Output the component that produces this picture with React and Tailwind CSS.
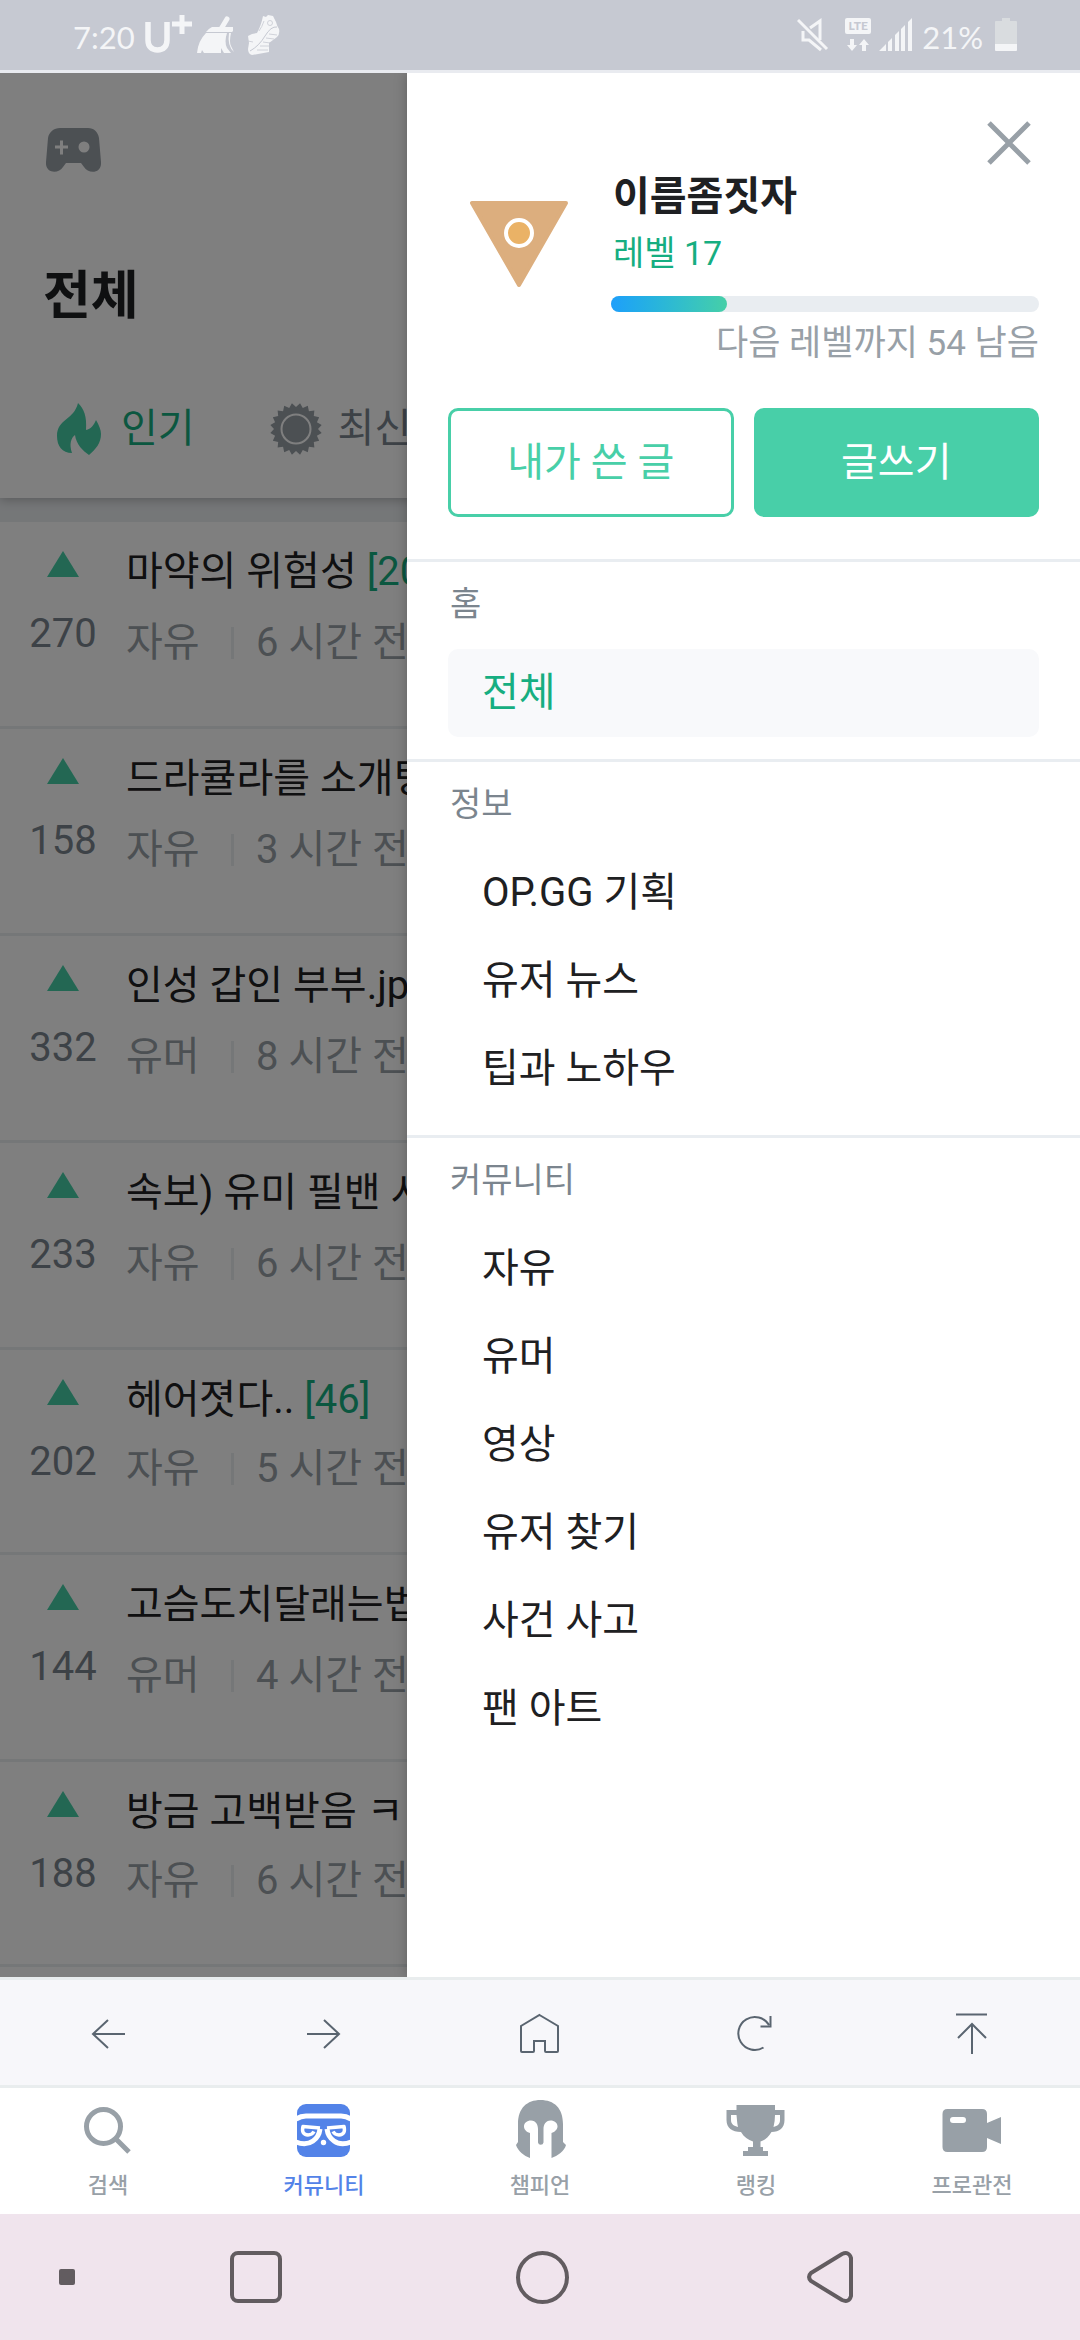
import React from 'react';

const posts = [
  { votes: 270, title: '마약의 위험성', comments: 20, board: '자유', time: '6 시간 전', hasImage: true },
  { votes: 158, title: '드라큘라를 소개팅', board: '자유', time: '3 시간 전', hasImage: true },
  { votes: 332, title: '인성 갑인 부부.jp', board: '유머', time: '8 시간 전', hasImage: true },
  { votes: 233, title: '속보) 유미 필밴 시', board: '자유', time: '6 시간 전', hasImage: true },
  { votes: 202, title: '헤어졋다..', comments: 46, board: '자유', time: '5 시간 전', hasImage: false },
  { votes: 144, title: '고슴도치달래는법', board: '유머', time: '4 시간 전', hasImage: true },
  { votes: 188, title: '방금 고백받음 ㅋ', board: '자유', time: '6 시간 전', hasImage: false },
];

const menu = [
  { name: '홈', items: ['전체'] },
  { name: '정보', items: ['OP.GG 기획', '유저 뉴스', '팁과 노하우'] },
  { name: '커뮤니티', items: ['자유', '유머', '영상', '유저 찾기', '사건 사고', '팬 아트'] },
];

function StatusBar() {
  return (
    <header className="flex h-[73px] items-center justify-between border-b-[3px] border-[#e9ebf0] bg-[#c6c9d2] pl-[73px] pr-[63px] font-['Lato',sans-serif] text-[31px] leading-10 text-[#f4f5f7]">
      <div className="flex items-center">
        <span className="pt-1">7:20</span>
        <svg viewBox="0 0 50 40" className="ml-2 h-10 w-[50px]" fill="none" stroke="currentColor" aria-label="U+">
          <path d="M5 7v18c0 7 4 10 9.500 10s9.500-3 9.500-10V7" strokeWidth="5.500" />
          <path d="M29 9h20M39 -1v20" strokeWidth="5" />
        </svg>
        <svg viewBox="0 0 38 40" className="ml-1 h-10 w-[38px]" fill="currentColor">
          <path d="M30 4l-6 10" stroke="currentColor" strokeWidth="5" strokeLinecap="round" />
          <path d="M15 12h21v4l-1 1H9q2-3 6-5z" />
          <path d="M9 18h21q-3 9 0 15l4 5h-7l-3-5v5H7l-2-3-1 3H0q1-12 9-20z" />
          <path d="M32 18h2q-2 9 0 13l3 6q-7-6-5-19z" />
        </svg>
        <svg viewBox="0 0 34 40" className="ml-3 h-10 w-[34px]" fill="currentColor">
          <path d="M16 1l3 1 2-2 5 1 3 6q1 4 3 7 1 5-2 8l-8 6 0 9-17 3q-4-1-4-6l1-6-1-7 4-2 5-1q4-7 6-17z" />
          <g stroke="#c6c9d2" fill="none">
            <path d="M3 36Q12 31 18 21t12-9" />
            <path d="M19 23l8 1M16 27l7 1M13 31l9 0M10 35l11 0M22 19l8 1M1 26l5 1M17 6q-2 6-5 10" strokeWidth="0.800" />
            <circle cx="23" cy="8" r="2.500" strokeWidth="0.800" />
          </g>
        </svg>
      </div>
      <div className="flex items-center">
        <svg viewBox="0 0 32 34" className="h-[34px] w-8" fill="none" stroke="currentColor" strokeWidth="3">
          <path d="M1 2l29 29" />
          <path d="M13 10l10-7v19M6 13v9h6l12 10" />
        </svg>
        <div className="ml-4 flex w-[26px] flex-col items-center">
          <span className="flex h-4 w-full items-center justify-center rounded-xs bg-[#f4f5f7] text-[12px] font-black leading-4 text-[#c6c9d2]">LTE</span>
          <svg viewBox="0 0 22 14" className="mt-1 h-3.5 w-[22px]" fill="currentColor">
            <path d="M3 1h4v6h3l-5 6-5-6h3zM15 13h4V7h3l-5-6-5 6h3z" />
          </svg>
        </div>
        <svg viewBox="0 0 33 34" className="ml-2 h-[34px] w-[33px]" fill="currentColor">
          <path d="M0 33l7-7v7zM9 24l4-4v13H9zM16 17l4-4v20h-4zM22 11l4-4v26h-4zM29 4l4-4v33h-4z" />
        </svg>
        <span className="ml-2.5 pt-1">21%</span>
        <svg viewBox="0 0 22 34" className="ml-3 h-[34px] w-[22px]">
          <path d="M1 3h6V0h8v3h6q1 0 1 1v23H0V4q0-1 1-1z" fill="#d9dcdf" />
          <path d="M0 26h22v6q0 1-1 1H1q-1 0-1-1z" fill="#f4f5f7" />
        </svg>
      </div>
    </header>
  );
}

function GearIcon() {
  const teeth = Array.from({ length: 40 }, (_, i) => {
    const r = i % 2 === 0 ? 26 : 22;
    const a = (i * Math.PI) / 20 + Math.PI / 20;
    return `${(26 + r * Math.sin(a)).toFixed(2)},${(26 - r * Math.cos(a)).toFixed(2)}`;
  }).join(' ');
  return (
    <svg viewBox="0 0 52 52" className="h-[52px] w-[52px]">
      <polygon points={teeth} fill="#98a0a7" />
      <circle cx="26" cy="26" r="14.500" fill="none" stroke="#fff" strokeWidth="2" />
    </svg>
  );
}

function PostRow({ post }) {
  return (
    <li className="border-b-[3px] border-[#ebeef1]">
      <a href="#" className="flex pb-[53px] pt-5">
        <div className="flex w-[126px] flex-col items-center">
          <svg viewBox="0 0 32 26" className="mt-[9px] h-[26px] w-8">
            <path d="M16 0l16 26H0z" fill="#46cfa7" />
          </svg>
          <span className="mt-[35px] leading-[44px] text-[#7b858e]">{post.votes}</span>
        </div>
        <div className="flex flex-col gap-2.5 whitespace-nowrap">
          <div className="flex items-start gap-3 leading-[59px] text-[#1e2022]">
            <span>
              {post.title} {post.comments && <span className="text-[#16ae81]">[{post.comments}]</span>}
            </span>
            {post.hasImage && (
              <svg viewBox="0 0 24 36" className="h-[61px] w-9" fill="#98a0a7">
                <path d="M2 9h20v18H2zm3 14h14l-5-7-3 4-2-2z" fillRule="evenodd" />
              </svg>
            )}
          </div>
          <div className="flex items-center leading-[60px] text-[#98a0a7]">
            <span className="w-[105px]">{post.board}</span>
            <span className="mr-[22px] h-8 w-[3px] bg-[#ebeef1]" />
            <span>{post.time}</span>
          </div>
        </div>
      </a>
    </li>
  );
}

function Feed() {
  return (
    <div className="overflow-hidden bg-white text-[40px]">
      <div className="relative h-[425px] bg-white shadow-[0_2px_10px_rgba(0,0,0,0.25)]">
        <div className="pl-[46px] pt-[55px]">
          <svg viewBox="0 0 56 44" className="h-11 w-14">
            <path d="M14 0h28c6 0 10 4 11 10l2 24c1 12-13 12-17 5l-3-4H20l-3 4c-4 7-18 7-17-5L2 10C3 4 8 0 14 0z" fill="#98a0a7" />
            <path d="M9 19h13M15.500 12.500v14" stroke="#fff" strokeWidth="3" />
            <circle cx="38" cy="19" r="5.500" fill="#fff" />
          </svg>
        </div>
        <h1 className="pl-[43px] pt-[87px] text-[52px] font-bold leading-[76px] text-[#1e2022]">전체</h1>
        <nav className="flex items-center pl-[57px] pt-[68px] leading-[52px]">
          <a href="#" className="flex items-center gap-5 text-[#16ae81]">
            <svg viewBox="0 0 44 52" className="h-[52px] w-11" fill="#46cfa7">
              <path d="M21 0c6 6 9 13 8 27 5-1 8-5 10-10 3 5 5 10 5 14 0 9-5 15-12 21-6-4-13-11-14-20-4 3-6 9-3 18C5 50 0 43 0 33c0-17 17-16 21-33z" />
            </svg>
            인기
          </a>
          <a href="#" className="ml-[75px] flex items-center gap-4 text-[#7b858e]">
            <GearIcon />
            최신
          </a>
        </nav>
      </div>
      <div className="h-6 bg-[#ebeef1]" />
      <ul>
        {posts.map((post) => (
          <PostRow key={post.votes} post={post} />
        ))}
      </ul>
    </div>
  );
}

function Drawer() {
  return (
    <aside className="absolute inset-y-0 right-0 w-[673px] max-w-full bg-white shadow-[0_0_12px_rgba(0,0,0,0.25)]">
      <div className="border-b-[3px] border-[#e9edf1] px-[41px] pb-[42px] pt-[46px]">
        <div className="flex justify-end pr-1.5">
          <button type="button" aria-label="닫기" className="h-12 w-12">
            <svg viewBox="0 0 48 48" className="h-12 w-12" stroke="#98a0a7" strokeWidth="5">
              <path d="M4 4l40 40M44 4L4 44" />
            </svg>
          </button>
        </div>
        <div className="flex gap-[21px]">
          <div className="flex w-[142px] justify-center pt-[34px]">
            <svg viewBox="0 0 100 88" className="h-[88px] w-[100px]">
              <path d="M3 2h94L50 84z" fill="#dcae7e" stroke="#dcae7e" strokeWidth="4" strokeLinejoin="round" />
              <circle cx="50" cy="32" r="13" fill="#eab266" stroke="#fff" strokeWidth="4" />
            </svg>
          </div>
          <div className="min-w-0 flex-1">
            <div className="pl-0.5 pt-0.5 text-[40px] font-bold leading-14 text-[#1e2022]">이름좀짓자</div>
            <div className="pl-0.5 text-[34px] leading-14 text-[#16ae81]">레벨 17</div>
            <div className="mt-[15px] h-4 rounded-full bg-[#e9edf1]">
              <div className="h-4 w-[27%] rounded-full bg-linear-to-r from-[#1f9ffa] to-[#46cfa7]" />
            </div>
            <div className="pt-0.5 text-right text-[35px] leading-15 text-[#98a0a7]">다음 레벨까지 54 남음</div>
          </div>
        </div>
        <div className="mt-[34px] grid grid-cols-2 gap-5 text-[40px]">
          <button type="button" className="h-[109px] rounded-[10px] border-[3px] border-[#48cfa8] text-[#48cfa8]">
            내가 쓴 글
          </button>
          <button type="button" className="h-[109px] rounded-[10px] bg-[#48cfa8] text-white">
            글쓰기
          </button>
        </div>
      </div>
      {menu.map((section) => (
        <section key={section.name} className="border-b-[3px] border-[#e9edf1] px-[41px] pb-[22px] last:border-b-0">
          <h2 className="pl-0.5 pt-3 text-[34px] leading-15 text-[#7b858e]">{section.name}</h2>
          <ul className="pt-[15px] text-[40px]">
            {section.items.map((item) => (
              <li key={item}>
                <a
                  href="#"
                  className={
                    item === '전체'
                      ? 'block rounded-[10px] bg-[#f8f9fb] px-[34px] leading-[88px] text-[#16ae81]'
                      : 'block px-[34px] leading-[88px] text-[#1e2022]'
                  }
                >
                  {item}
                </a>
              </li>
            ))}
          </ul>
        </section>
      ))}
    </aside>
  );
}

function BrowserBar() {
  const buttons = [
    { label: '뒤로', d: 'M47 31H15M30 17L15 31l15 14' },
    { label: '앞으로', d: 'M13 31h32M30 17l15 14-15 14' },
    { label: '홈', d: 'M29.500 12L48 23v25q0 1-1 1H36q-1 0-1-1V38H24v10q0 1-1 1H12q-1 0-1-1V23z' },
    { label: '새로고침', d: 'M44.500 13v10.500H34.500M43 22A16.500 16.500 0 1 0 37.500 44.500' },
    { label: '맨 위로', d: 'M14 11.500h31M30 51V21M16 35l14-14 14 14' },
  ];
  return (
    <div className="grid h-[111px] grid-cols-5 border-y-[3px] border-[#e9edee] bg-[#f7f7fa]">
      {buttons.map((button) => (
        <button key={button.label} type="button" aria-label={button.label} className="flex items-center justify-center">
          <svg viewBox="0 0 60 60" className="h-15 w-15" fill="none" stroke="#5a6570" strokeWidth="2">
            <path d={button.d} />
          </svg>
        </button>
      ))}
    </div>
  );
}

function Tab({ label, active, children }) {
  return (
    <a
      href="#"
      className={
        active
          ? 'flex flex-col items-center gap-3 pt-[11px] font-medium text-[#5383e8]'
          : 'flex flex-col items-center gap-3 pt-[11px] font-medium text-[#98a0a7]'
      }
    >
      <svg viewBox="0 0 60 60" className="h-15 w-15" fill="currentColor">
        {children}
      </svg>
      <span>{label}</span>
    </a>
  );
}

function TabBar() {
  return (
    <nav className="grid h-[126px] grid-cols-5 bg-white text-[22px] leading-[30px]">
      <Tab label="검색">
        <circle cx="25.500" cy="27.500" r="17" fill="none" stroke="currentColor" strokeWidth="5" />
        <path d="M37 39l14 14" stroke="currentColor" strokeWidth="5" />
      </Tab>
      <Tab label="커뮤니티" active>
        <rect x="3" y="5" width="53" height="53" rx="9" />
        <g fill="none" stroke="#fff" strokeWidth="5">
          <path d="M2 20q5-3 10-3h35q5 0 10 3" />
          <path d="M2 43q10 4 17-1 6-4 7-12" />
          <path d="M26 29L9 27.500q-2 8 5 8.500 4 0 6-3.500" strokeWidth="3.500" strokeLinejoin="round" />
          <path d="M57 43q-10 4-17-1-6-4-7-12" />
          <path d="M33 29l17-1.500q2 8-5 8.500-4 0-6-3.500" strokeWidth="3.500" strokeLinejoin="round" />
        </g>
        <circle cx="29.500" cy="43.500" r="2.700" fill="#fff" />
      </Tab>
      <Tab label="챔피언">
        <path d="M30.500 1C17 1 8 9 8 25v18l-2 3c2 6 8 11 14 13V34c-4-1-6-4-6-6.500 0-3.500 3-6 7-6 5 0 7 4.500 7 8.500v13.500a2.800 2.800 0 0 0 5.500 0V30c0-4 2-8.500 7-8.500 4 0 7 2.500 7 6 0 2.500-2.500 5.500-6 6.500v25c6-2 13-7 14.500-13L53 43V25C53 9 44 1 30.500 1z" />
      </Tab>
      <Tab label="랭킹">
        <path
          fillRule="evenodd"
          d="M10.500 6h38.500v5h9.500v10c0 8-5 12-13 12-3 5-6 8-11 9.500V48H37v4h5v5H17v-5h5v-4h5v-5.500c-5-1.500-9-4.500-12-9.500C6 33 .5 29 .5 21V11h10zM5 16v5c0 4 3 6 7 7-1-4-1-8-1.500-12zM49 16c0 4-.5 8-1.500 12 4-1 6.500-3 6.500-7v-5z"
        />
      </Tab>
      <Tab label="프로관전">
        <path
          fillRule="evenodd"
          d="M5.500 10H40q5 0 5 5v9l14-6v27l-14-6v9q0 5-5 5H5.500q-5 0-5-5V15q0-5 5-5zM11 18q-3 0-3 3t3 3h10q3 0 3-3t-3-3z"
        />
      </Tab>
    </nav>
  );
}

function SystemNav() {
  return (
    <div className="flex h-[126px] items-center bg-[#f0e4ed] pr-[107px]">
      <div className="w-[112px] pl-[59px]">
        <div className="h-4 w-4 rounded-xs bg-[#625c60]" />
      </div>
      <button type="button" aria-label="최근 앱" className="flex flex-1 justify-center">
        <span className="h-[52px] w-[52px] rounded-[8px] border-4 border-[#625c60]" />
      </button>
      <button type="button" aria-label="홈 화면" className="flex flex-1 justify-center">
        <span className="h-[53px] w-[53px] rounded-full border-4 border-[#625c60]" />
      </button>
      <button type="button" aria-label="뒤로 가기" className="flex flex-1 justify-center">
        <svg viewBox="0 0 46 54" className="h-[54px] w-[46px]" fill="none" stroke="#625c60" strokeWidth="4">
          <path d="M4 23L35 4q7-3 9 4v38q-2 7-9 4L4 31q-4-4 0-8z" />
        </svg>
      </button>
    </div>
  );
}

export default function App() {
  return (
    <div className="flex min-h-screen flex-col font-['Roboto','Noto_Sans_CJK_KR',sans-serif]">
      <StatusBar />
      <main className="relative flex-1 overflow-hidden bg-white">
        <Feed />
        <div className="absolute inset-0 bg-black/50" />
        <Drawer />
      </main>
      <BrowserBar />
      <TabBar />
      <SystemNav />
    </div>
  );
}
